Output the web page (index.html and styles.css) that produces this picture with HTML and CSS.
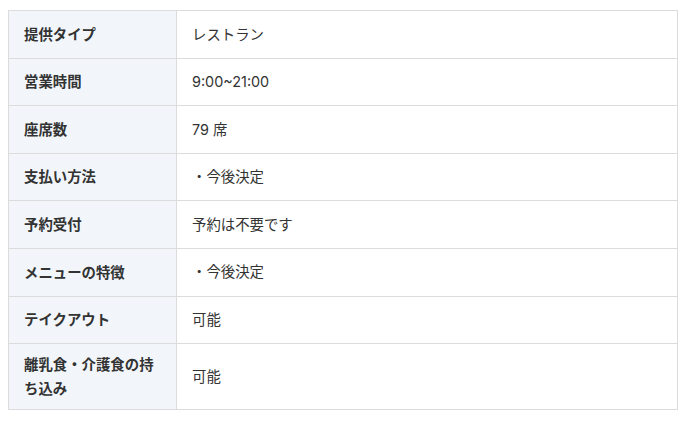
FILE: index.html
```html
<!DOCTYPE html>
<html lang="ja">
<head>
<meta charset="utf-8">
<link rel="stylesheet" href="styles.css">
</head>
<body>
<table class="info">
  <tbody>
    <tr><th>提供タイプ</th><td>レストラン</td></tr>
    <tr><th>営業時間</th><td>9:00~21:00</td></tr>
    <tr><th>座席数</th><td>79 席</td></tr>
    <tr><th>支払い方法</th><td>・今後決定</td></tr>
    <tr><th>予約受付</th><td>予約は不要です</td></tr>
    <tr><th>メニューの特徴</th><td>・今後決定</td></tr>
    <tr><th>テイクアウト</th><td>可能</td></tr>
    <tr><th>離乳食・介護食の持ち込み</th><td>可能</td></tr>
  </tbody>
</table>
</body>
</html>
```
FILE: styles.css
```css
body {
  margin: 10px 8px;
  background: #fff;
  font-family: "Open Sans", "Noto Sans CJK JP", sans-serif;
  color: #333;
}
.info {
  width: 670px;
  border-collapse: collapse;
  border: 1px solid #d9d9d9;
  font-size: 14.4px;
}
.info th,
.info td {
  border: 1px solid #dcdcdc;
  text-align: left;
  vertical-align: middle;
}
.info th {
  width: 137px;
  padding: 9px 15px;
  line-height: 23.5px;
  background: #f2f6fa;
  font-weight: bold;
  color: #333;
}
.info td {
  padding: 13.5px 15px;
  line-height: 19.6px;
  font-weight: normal;
  font-family: Inter, "Noto Sans CJK JP", sans-serif;
}
```
